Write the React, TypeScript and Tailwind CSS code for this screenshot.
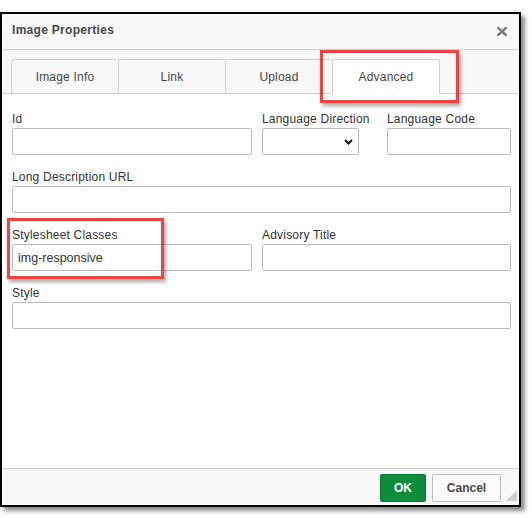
import type { ReactNode } from "react";

const FONT = { fontFamily: '"Liberation Sans", Arial, sans-serif' };

function Field({ label, width, children }: { label: string; width: string; children?: ReactNode }) {
  return (
    <div className={"flex flex-col " + width}>
      <label className="h-[16px] whitespace-nowrap text-[12px] leading-[18px] tracking-[0.2px] text-[#333]">{label}</label>
      <div className="mt-[2px] h-[27px]">{children}</div>
    </div>
  );
}

function TextBox({ value = "" }: { value?: string }) {
  return (
    <input
      readOnly
      value={value}
      className="h-[27px] w-full rounded-[2px] border border-[#bcbcbc] bg-white px-[5px] text-[12.5px] text-[#333] outline-none"
      style={FONT}
    />
  );
}

function SelectBox() {
  return (
    <div className="flex h-[27px] w-full items-center justify-end rounded-[2px] border border-[#bcbcbc] bg-white pr-[5px]">
      <svg width="9" height="6" viewBox="0 0 9 6" aria-hidden>
        <polyline points="1,1 4.5,4.5 8,1" fill="none" stroke="#111" strokeWidth="2" />
      </svg>
    </div>
  );
}

function Tab({ label, active, last }: { label: string; active?: boolean; last?: boolean }) {
  return (
    <div
      className={
        "-mb-px flex h-[35px] items-center justify-center rounded-t-[3px] border-t border-l border-[#d1d1d1] text-[12px] tracking-[0.2px] text-[#484848] " +
        (last ? "w-[108px] border-r " : "w-[107px] ") +
        (active ? "bg-white" : "border-b bg-[#f8f8f8]")
      }
    >
      {label}
    </div>
  );
}

export default function App() {
  return (
    <div className="relative h-[518px] w-[532px] overflow-hidden bg-white" style={FONT}>
      <div className="mt-[12px] flex h-[495px] w-[521px] flex-col border-2 border-black bg-white shadow-[4px_4px_4px_rgba(0,0,0,0.45)]">
        {/* title bar */}
        <div className="flex h-[36px] items-center justify-between border-b border-[#d1d1d1] bg-[#f8f8f8] pb-[3px] pl-[10px] pr-[12px]">
          <span className="text-[12px] font-bold tracking-[0.3px] text-[#484848]">Image Properties</span>
          <svg width="10" height="9" viewBox="0 0 10 9" className="mt-[3px]" aria-hidden>
            <path d="M1.2 1 L8.8 8 M8.8 1 L1.2 8" stroke="#7b7b7b" strokeWidth="2.4" strokeLinecap="square" />
          </svg>
        </div>

        {/* tabs */}
        <div className="flex h-[44px] items-end border-b border-[#d1d1d1] bg-[#f8f8f8] pl-[9px]">
          <Tab label="Image Info" />
          <Tab label="Link" />
          <Tab label="Upload" />
          <Tab label="Advanced" active last />
        </div>

        {/* advanced panel */}
        <div className="flex flex-1 flex-col gap-[13px] pl-[10px] pr-[8px] pt-[16px]">
          <div className="flex">
            <Field label="Id" width="w-[240px]">
              <TextBox />
            </Field>
            <Field label="Language Direction" width="ml-[10px] w-[97px]">
              <SelectBox />
            </Field>
            <Field label="Language Code" width="ml-[28px] w-[124px]">
              <TextBox />
            </Field>
          </div>
          <Field label="Long Description URL" width="w-[499px]">
            <TextBox />
          </Field>
          <div className="flex">
            <Field label="Stylesheet Classes" width="w-[240px]">
              <TextBox value="img-responsive" />
            </Field>
            <Field label="Advisory Title" width="ml-[10px] w-[249px]">
              <TextBox />
            </Field>
          </div>
          <Field label="Style" width="w-[499px]">
            <TextBox />
          </Field>
        </div>

        {/* footer */}
        <div className="relative flex h-[37px] items-start justify-end gap-[6px] border-t border-[#d1d1d1] bg-[#f8f8f8] pr-[18px] pt-[5px]">
          <button className="h-[28px] w-[46px] rounded-[2px] border border-[#0b7a34] bg-[#0f8a3c] text-[12px] font-bold text-white">
            OK
          </button>
          <button className="h-[28px] w-[69px] rounded-[2px] border border-[#bcbcbc] bg-[#fbfbfb] text-[12px] font-bold text-[#484848]">
            Cancel
          </button>
          <svg width="11" height="11" viewBox="0 0 11 11" className="absolute bottom-[4px] right-[2px]" aria-hidden>
            <polygon points="11,0 11,11 0,11" fill="#cfcfcf" />
          </svg>
        </div>
      </div>

      {/* highlight callouts */}
      <div className="absolute left-[320px] top-[50px] h-[53px] w-[139px] border-[3px] border-[#ee4343] shadow-[2px_3px_4px_rgba(0,0,0,0.35)]" />
      <div className="absolute left-[7px] top-[218px] h-[61px] w-[157px] border-[3px] border-[#ee4343] shadow-[2px_3px_4px_rgba(0,0,0,0.35)]" />
    </div>
  );
}
